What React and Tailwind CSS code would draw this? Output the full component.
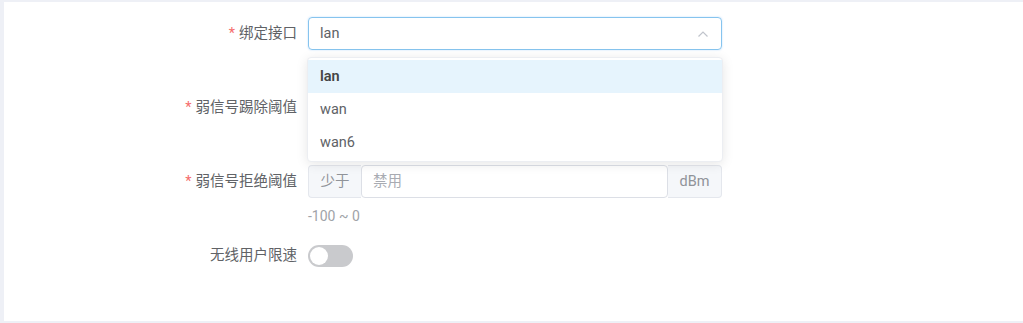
const font = { fontFamily: 'Roboto, "Noto Sans CJK SC", sans-serif' };

const Label = ({ required, children }) => (
  <div className="w-[304px] shrink-0 pr-[11px] text-right text-[14.5px] text-[#606266]">
    {required && <span className="mr-1 text-[#f56c6c]">*</span>}
    {children}
  </div>
);

const App = () => {
  const options = ['lan', 'wan', 'wan6'];

  return (
    <div className="h-[323px] w-full bg-[#eef0f6] py-[2px] pl-[4px]" style={font}>
      <div className="flex h-full flex-col bg-white">
        {/* 绑定接口 */}
        <div className="mt-[15px] flex items-center">
          <Label required>绑定接口</Label>
          <div className="relative w-[414px]">
            <div className="flex h-[33px] items-center justify-between rounded border border-[#86c4ee] px-[11px] text-[14.5px] text-[#606266] shadow-[0_0_2px_rgba(64,158,255,0.35)]">
              <span>lan</span>
              <svg width="14" height="14" viewBox="0 0 14 14" fill="none" stroke="#c0c4cc" strokeWidth="1.2">
                <path d="M2.5 9.5 L7 5 L11.5 9.5" />
              </svg>
            </div>
            <div className="absolute left-[-1px] top-[40px] z-10 w-[416px] rounded border border-[#eceef2] bg-white py-[2px] shadow-[0_2px_12px_rgba(0,0,0,0.1)]">
              {options.map((o, i) => (
                <div
                  key={o}
                  className={
                    i === 0
                      ? 'flex h-[33px] items-center bg-[#e6f4fd] px-[12px] text-[14.5px] font-semibold text-[#444]'
                      : 'flex h-[33px] items-center px-[12px] text-[14.5px] text-[#606266]'
                  }
                >
                  {o}
                </div>
              ))}
            </div>
          </div>
        </div>

        {/* 弱信号踢除阈值 */}
        <div className="mt-[41px] flex h-[33px] items-center">
          <Label required>弱信号踢除阈值</Label>
        </div>

        {/* 弱信号拒绝阈值 */}
        <div className="mt-[41px] flex items-center">
          <Label required>弱信号拒绝阈值</Label>
          <div className="flex h-[33px] w-[414px] text-[14.5px]">
            <div className="flex w-[53px] items-center justify-center rounded-l border border-r-0 border-[#e4e7ed] bg-[#f5f7fa] text-[#909399]">
              少于
            </div>
            <div className="flex flex-1 items-center rounded border border-[#dcdfe6] px-[11px] text-[#a8abb2]">
              禁用
            </div>
            <div className="flex w-[54px] items-center justify-center rounded-r border border-l-0 border-[#e4e7ed] bg-[#f5f7fa] text-[#909399]">
              dBm
            </div>
          </div>
        </div>
        <div className="ml-[304px] mt-[8px] text-[14px] text-[#a0a3a8]">-100 ~ 0</div>

        {/* 无线用户限速 */}
        <div className="mt-[18px] flex items-center">
          <Label>无线用户限速</Label>
          <div className="flex h-[22px] w-[45px] items-center rounded-full bg-[#c9cacd] p-[2px]">
            <div className="h-[18px] w-[18px] rounded-full bg-white" />
          </div>
        </div>
      </div>
    </div>
  );
};

export default App;
